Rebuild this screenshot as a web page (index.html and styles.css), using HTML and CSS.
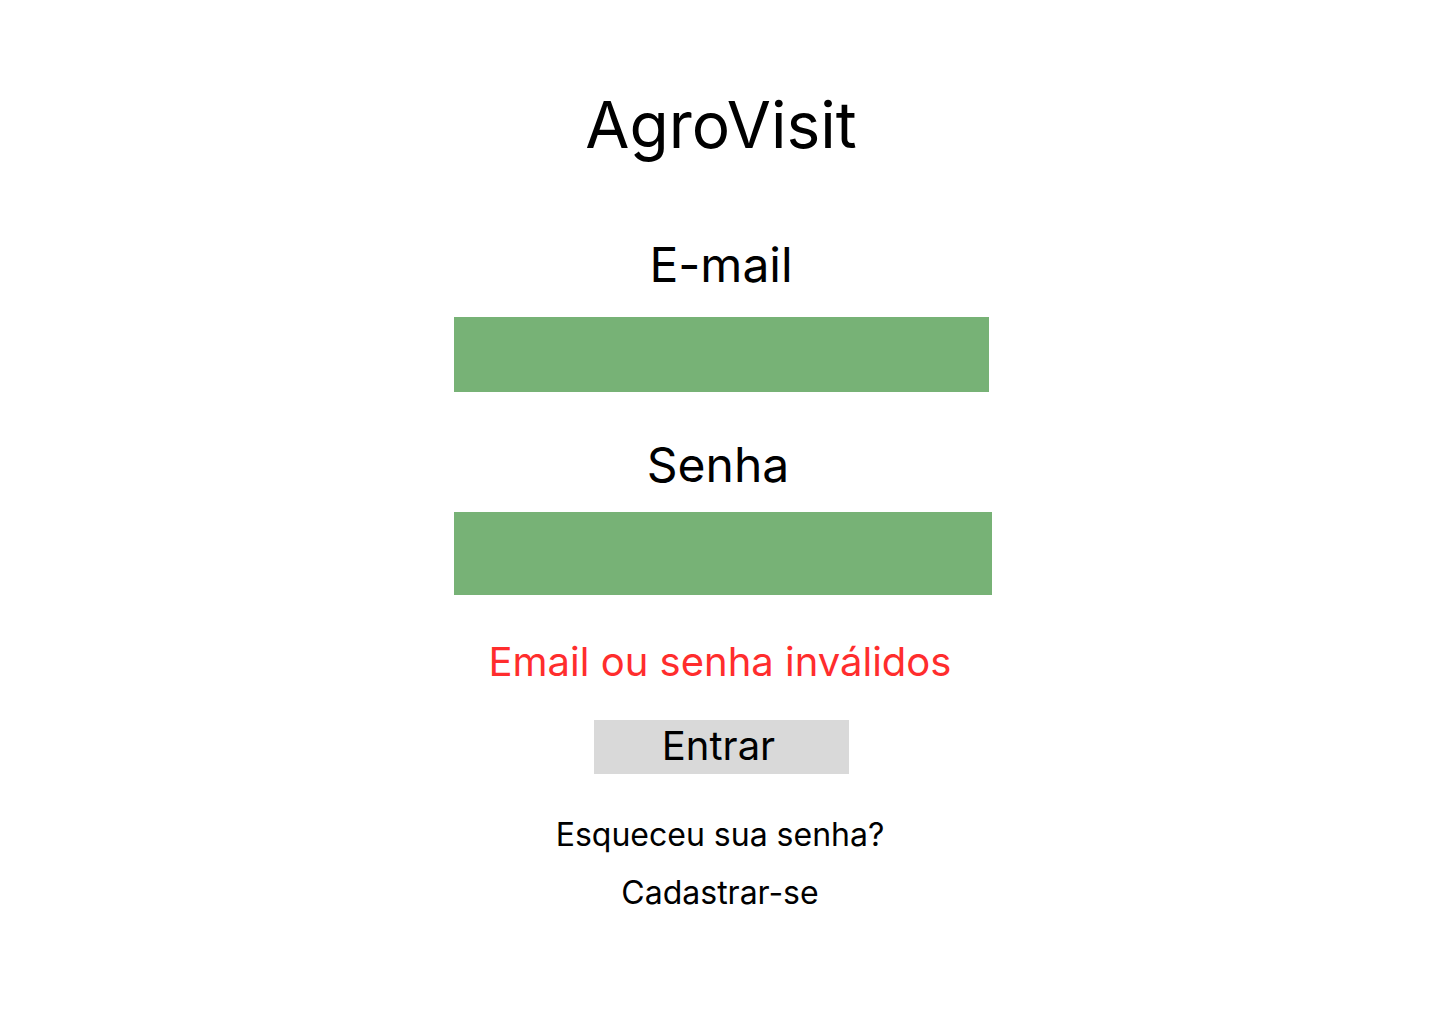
FILE: index.html
```html
<!DOCTYPE html>
<html lang="pt-BR">
<head>
<meta charset="utf-8">
<title>AgroVisit</title>
<link rel="stylesheet" href="styles.css">
</head>
<body>
<main class="login">
  <h1 class="title">AgroVisit</h1>
  <label class="label label-email" for="email">E-mail</label>
  <div class="field field-email" id="email"></div>
  <label class="label label-senha" for="senha">Senha</label>
  <div class="field field-senha" id="senha"></div>
  <p class="error">Email ou senha inválidos</p>
  <button class="btn" type="button">Entrar</button>
  <a class="link link-forgot" href="#">Esqueceu sua senha?</a>
  <a class="link link-signup" href="#">Cadastrar-se</a>
</main>
</body>
</html>
```
FILE: styles.css
```css
html, body {
  margin: 0;
  padding: 0;
  background: #ffffff;
}
body {
  font-family: Inter, "Noto Sans", sans-serif;
  color: #000000;
}
.login {
  display: flex;
  flex-direction: column;
  align-items: center;
  padding-top: 86px;
  width: 1440px;
}
.title {
  margin: 0;
  font-size: 64px;
  font-weight: 400;
  line-height: 78px;
  transform: translateX(1px);
}
.label {
  font-size: 48px;
  line-height: 58px;
}
.label-email {
  margin-top: 72px;
  transform: translateX(1px);
}
.label-senha {
  margin-top: 44px;
  margin-left: -4px;
}
.field {
  background: #77b276;
}
.field-email {
  margin-top: 23px;
  width: 535px;
  height: 75px;
  margin-left: 3px;
}
.field-senha {
  margin-top: 18px;
  width: 538px;
  height: 83px;
  margin-left: 6px;
}
.error {
  margin: 43px 0 0;
  font-size: 40px;
  line-height: 48px;
  color: #ff2d2d;
}
.btn {
  margin-top: 34px;
  margin-left: 3px;
  width: 255px;
  height: 54px;
  padding: 0 6px 3px 0;
  border: 0;
  background: #d9d9d9;
  font-family: inherit;
  font-size: 40px;
  line-height: 48px;
  color: #000000;
}
.link {
  font-size: 32px;
  line-height: 39px;
  color: #000000;
  text-decoration: none;
}
.link-forgot {
  margin-top: 41px;
}
.link-signup {
  margin-top: 19px;
}
```
